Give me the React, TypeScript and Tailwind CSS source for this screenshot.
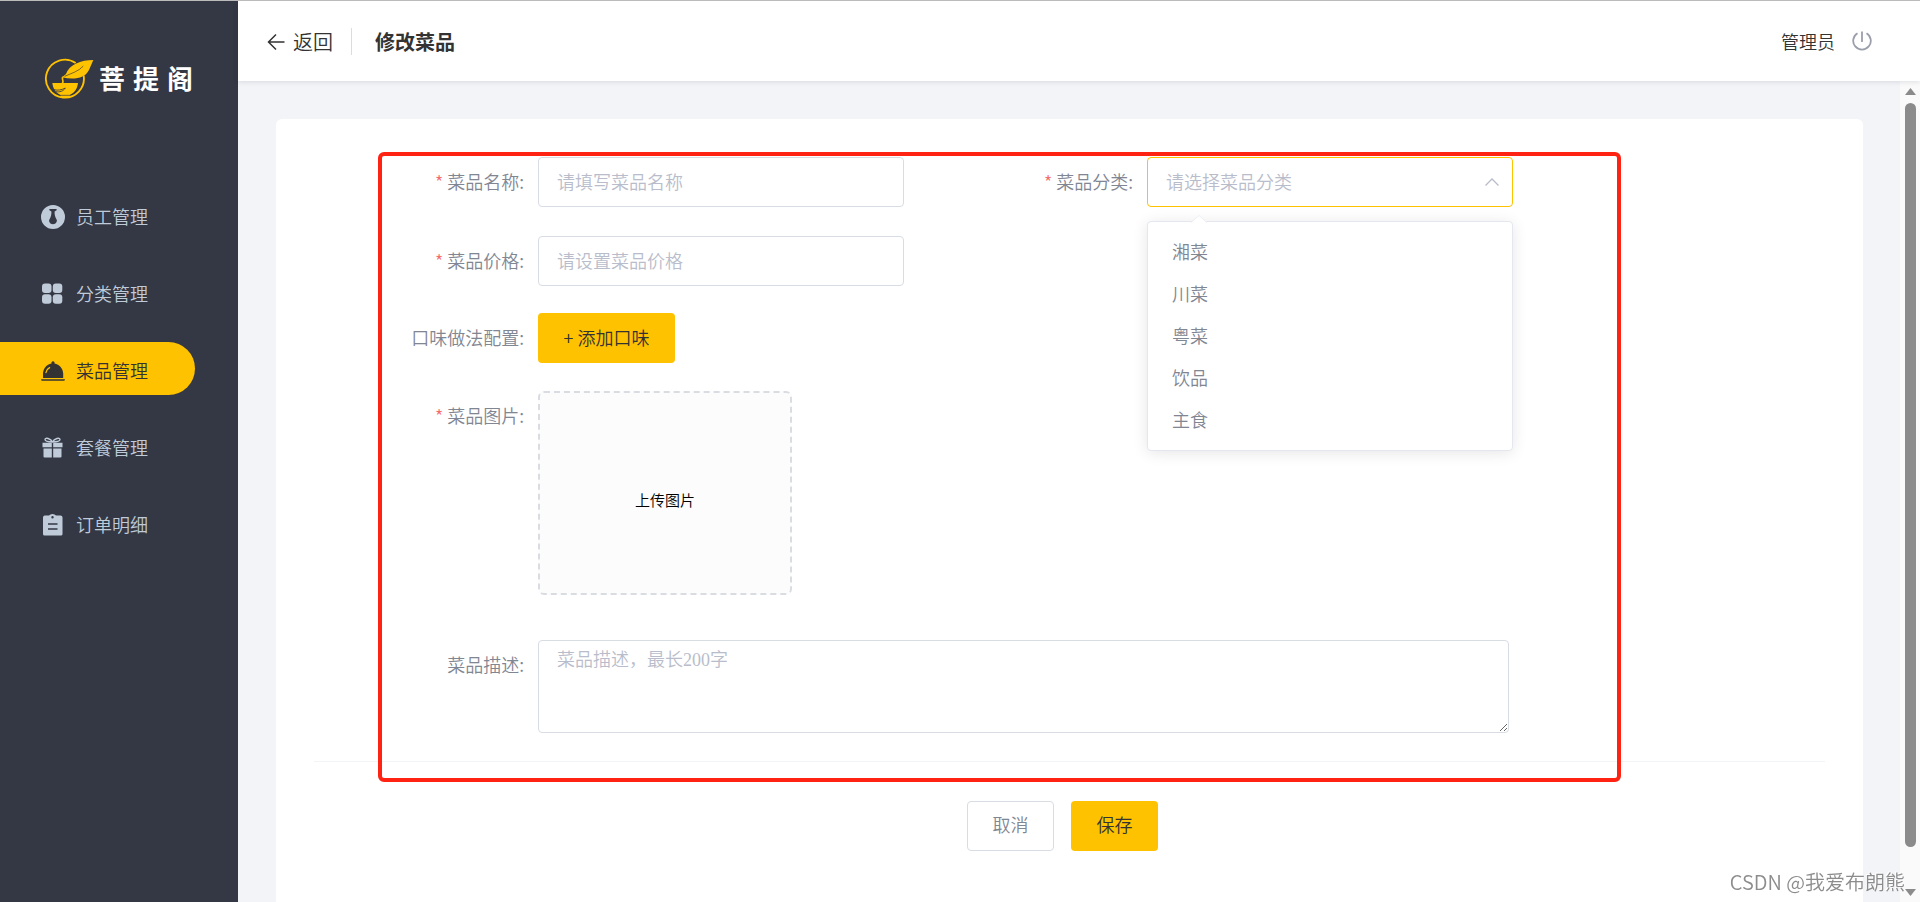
import React, { useState } from 'react';

interface MenuItem {
  name: string;
  icon: React.ReactNode;
}

const iconClass = 'w-6 h-6 shrink-0';

const menu: MenuItem[] = [
  {
    name: '员工管理',
    icon: (
      <svg viewBox="0 0 24 24" className={iconClass} fill="currentColor">
        <path
          fillRule="evenodd"
          d="M12 0a12 12 0 1 1 0 24a12 12 0 0 1 0-24zM8.4 4v1.200L10.400 6.600C10.600 9.600 9.900 12.200 8.300 14.800C7.600 16.200 8.900 19.200 12 19.200s4.400-3 3.700-4.400C14.100 12.200 13.400 9.600 13.600 6.600L15.600 5.200V4z"
        />
      </svg>
    ),
  },
  {
    name: '分类管理',
    icon: (
      <svg viewBox="0 0 24 24" className={iconClass} fill="currentColor">
        <rect x="1" y="1.500" width="9.500" height="9.500" rx="3" />
        <rect x="11.800" y="1.500" width="9.500" height="9.500" rx="3" />
        <rect x="1" y="12.300" width="9.500" height="9.500" rx="3" />
        <rect x="11.800" y="12.300" width="9.500" height="9.500" rx="3" />
      </svg>
    ),
  },
  {
    name: '菜品管理',
    icon: (
      <svg viewBox="0 0 24 24" className={iconClass} fill="currentColor">
        <path d="M10.500 4.500a1.600 1.600 0 1 1 3 0C18.500 5.400 22 9.600 22.200 14.500v4.500H2v-4.500C2.200 9.600 5.500 5.400 10.500 4.500z" />
        <path d="M5 13.500c.4-2.200 1.600-3.800 3.600-4.800" stroke="#ffc200" strokeWidth="1.300" fill="none" strokeLinecap="round" />
        <path d="M0 20.200h24l-.6 1.600H.6z" />
      </svg>
    ),
  },
  {
    name: '套餐管理',
    icon: (
      <svg viewBox="0 0 24 24" className={iconClass} fill="currentColor">
        <path
          d="M11.500 6C9.800 2.400 4 1 4 3.600 4 5.600 7.500 6 11.500 6zm0 0c1.700-3.600 7.500-5 7.500-2.400C19 5.600 15.500 6 11.500 6z"
          fill="none"
          stroke="currentColor"
          strokeWidth="1.400"
        />
        <path d="M1.500 6.800h9.300v4.400H1.500zM12.200 6.800h9.300v4.400h-9.300zM2.500 12.500h8.300V21.500H3.500a1 1 0 0 1-1-1zM12.200 12.500h8.300V20.500a1 1 0 0 1-1 1h-7.300z" />
      </svg>
    ),
  },
  {
    name: '订单明细',
    icon: (
      <svg viewBox="0 0 24 24" className={iconClass} fill="currentColor">
        <path
          fillRule="evenodd"
          d="M3.500 2.500h4.500a4 3 0 0 1 7 0h4.500a2 2 0 0 1 2 2v16.500a1.500 1.500 0 0 1-1.500 1.500H3.500A1.500 1.500 0 0 1 2 21V4.500a2 2 0 0 1 1.500-2zM7 10.300v1.500h9.500v-1.500zM7 15.300v1.500h9.500v-1.500zM11.500 3a1.200 1.200 0 1 0 0 2.400a1.200 1.200 0 0 0 0-2.400z"
        />
      </svg>
    ),
  },
];

const categories = ['湘菜', '川菜', '粤菜', '饮品', '主食'];

const Logo: React.FC = () => (
  <div className="flex items-center gap-1 pt-[56px] pl-[44px] h-[100px]">
    <svg viewBox="42 38 153 126" className="w-[51px] h-[42px]" fill="none">
      <path d="M137 53A57 57 0 1 0 161 91" stroke="#ffc200" strokeWidth="5.500" />
      <path d="M190 44C152 44 118 58 108 86L96 96C132 104 164 100 177 74C182 64 185 54 190 44Z" fill="#ffc200" />
      <path d="M104 93C124 84 146 78 160 62" stroke="#343744" strokeWidth="2" />
      <path d="M99 95C92 100 104 106 97 114" stroke="#ffc200" strokeWidth="5" />
      <path d="M67 113H144C142 130 134 142 119 149V156H92V149C77 142 69 130 67 113Z" fill="#ffc200" />
      <path d="M72 133C82 136 96 134 106 128C100 138 88 141 78 139" stroke="#343744" strokeWidth="2.500" />
      <path d="M92 150H119" stroke="#343744" strokeWidth="2" />
    </svg>
    <div className="flex gap-2 pb-0.5 text-[26px] leading-8 font-bold text-white">
      <span>菩</span>
      <span>提</span>
      <span>阁</span>
    </div>
  </div>
);

const Sidebar: React.FC = () => (
  <aside className="w-[238px] shrink-0 bg-[#343744]">
    <Logo />
    <nav className="flex flex-col gap-6 mt-[87px]">
      {menu.map((item) => {
        const active = item.name === '菜品管理';
        return (
          <a
            key={item.name}
            href="#"
            className={
              active
                ? 'flex items-center gap-[11px] h-[53px] w-[195px] pl-[41px] pt-1 rounded-r-full bg-[#ffc200] text-[#333333]'
                : 'flex items-center gap-[11px] h-[53px] w-[195px] pl-[41px] pt-1 text-[#bfcbd9]'
            }
          >
            {item.icon}
            <span className="pb-0.5">{item.name}</span>
          </a>
        );
      })}
    </nav>
  </aside>
);

const Header: React.FC = () => (
  <header className="relative z-10 flex items-center h-20 pl-[29px] pr-12 bg-white shadow-[0_1px_5px_rgba(0,21,41,0.12)]">
    <button type="button" className="flex items-center gap-2 pt-0.5 text-xl text-[#333333]">
      <svg viewBox="0 0 18 18" className="w-[18px] h-[18px]" fill="none" stroke="currentColor" strokeWidth="1.500">
        <path d="M17.500 9H2M9 1.500L1.500 9L9 16.500" />
      </svg>
      返回
    </button>
    <div className="w-px h-[27px] ml-[18px] mr-[23px] bg-[#d8dde3]" />
    <h1 className="pt-0.5 text-xl font-bold text-[#333333]">修改菜品</h1>
    <div className="flex items-center gap-[17px] ml-auto text-[#333333]">
      <span>管理员</span>
      <button type="button" aria-label="退出">
        <svg viewBox="0 0 20 20" className="w-5 h-5" fill="none" stroke="#9b9fab" strokeWidth="1.800">
          <path d="M5.500 2.200A8.800 8.800 0 1 0 14.500 2.200M10 .5V11" />
        </svg>
      </button>
    </div>
  </header>
);

interface FieldProps {
  id: string;
  label: string;
  required?: boolean;
  children: React.ReactNode;
}

const Field: React.FC<FieldProps> = ({ id, label, required, children }) => (
  <div className="flex items-start">
    <label htmlFor={id} className="w-[150px] shrink-0 pr-[14px] text-right leading-[48px] text-[#818693]">
      {required && <span className="mr-1 text-[#f56c6c]">*</span>}
      {label}:
    </label>
    {children}
  </div>
);

const inputClass =
  'w-[366px] h-[50px] px-[18px] pb-0.5 rounded border border-[#d8dde3] bg-white text-[#333333] placeholder:text-[#b9bdcb] focus:outline-none';

const CategorySelect: React.FC = () => {
  const [open, setOpen] = useState(true);
  const [value, setValue] = useState('');

  return (
    <div className="relative">
      <select
        id="category"
        value={value}
        onChange={(e) => setValue(e.target.value)}
        onMouseDown={(e) => {
          e.preventDefault();
          setOpen(!open);
        }}
        className={`w-[366px] h-[50px] px-[18px] pb-0.5 rounded border border-[#ffc200] bg-white appearance-none focus:outline-none ${
          value ? 'text-[#333333]' : 'text-[#b9bdcb]'
        }`}
      >
        <option value="">请选择菜品分类</option>
        {categories.map((c) => (
          <option key={c}>{c}</option>
        ))}
      </select>
      <svg
        viewBox="0 0 14 8"
        className="absolute right-[14px] top-[21px] w-[14px] h-2 pointer-events-none"
        fill="none"
        stroke="#b9bdcb"
        strokeWidth="1.300"
      >
        <path d="M.5 7.500L7 1L13.500 7.500" />
      </svg>

      {open && (
        <div className="absolute left-0 top-16 w-full pt-2 pb-[10px] rounded border border-[#e4e7ed] bg-white shadow-[0_2px_15px_rgba(0,0,0,0.1)]">
          <svg viewBox="0 0 16 8" className="absolute left-[43px] -top-[7px] w-4 h-2">
            <path d="M0 7.500L8 0L16 7.500V8H0z" fill="#ffffff" />
            <path d="M0 7.500L8 .5L16 7.500" fill="none" stroke="#ebeef5" />
          </svg>
          <ul>
            {categories.map((c) => (
              <li key={c}>
                <button
                  type="button"
                  className="block w-full h-[42px] px-6 text-left text-[#818693] hover:bg-[#f5f7fa]"
                  onClick={() => {
                    setValue(c);
                    setOpen(false);
                  }}
                >
                  {c}
                </button>
              </li>
            ))}
          </ul>
        </div>
      )}
    </div>
  );
};

const DishForm: React.FC = () => (
  <form className="relative flex-1 px-[38px] pt-[38px] rounded-t-md bg-white" onSubmit={(e) => e.preventDefault()}>
    <div className="flex flex-col pl-[74px]">
      <div className="flex gap-[93px]">
        <Field id="name" label="菜品名称" required>
          <input id="name" type="text" placeholder="请填写菜品名称" className={inputClass} />
        </Field>
        <Field id="category" label="菜品分类" required>
          <CategorySelect />
        </Field>
      </div>
      <div className="mt-[29px]">
        <Field id="price" label="菜品价格" required>
          <input id="price" type="text" placeholder="请设置菜品价格" className={inputClass} />
        </Field>
      </div>
      <div className="mt-[27px]">
        <Field id="flavor" label="口味做法配置">
          <button id="flavor" type="button" className="h-[50px] w-[137px] pb-0.5 rounded bg-[#ffc200] text-[#333333]">
            + 添加口味
          </button>
        </Field>
      </div>
      <div className="mt-[28px]">
        <Field id="image" label="菜品图片" required>
          <button
            id="image"
            type="button"
            className="w-[254px] h-[204px] pt-[14px] rounded-md border-2 border-dashed border-[#d9dde2] bg-[#fcfcfc] text-[15px] text-black"
          >
            上传图片
          </button>
        </Field>
      </div>
      <div className="mt-[45px] pr-[316px]">
        <Field id="description" label="菜品描述">
          <textarea
            id="description"
            placeholder="菜品描述，最长200字"
            className="flex-1 h-[93px] px-[18px] py-[5px] rounded border border-[#d8dde3] bg-white font-['Liberation_Serif','Noto_Sans_CJK_SC',serif] placeholder:text-[#b9bdcb] focus:outline-none"
          />
        </Field>
      </div>
    </div>

    <div className="mt-7 pt-[39px] pr-[14px] flex justify-center gap-[17px] border-t border-[#f3f4f5]">
      <button type="button" className="w-[87px] h-[50px] pb-1 rounded border border-[#d8dde3] bg-white text-[#818693]">
        取消
      </button>
      <button type="submit" className="w-[87px] h-[50px] pb-1 rounded bg-[#ffc200] text-[#333333]">
        保存
      </button>
    </div>

    {/* highlight frame over the fields */}
    <div className="absolute left-[102px] right-[242px] top-[33px] h-[630px] rounded-md border-4 border-[#ff2314] pointer-events-none" />
  </form>
);

const ScrollBar: React.FC = () => (
  <div className="flex flex-col items-center w-5 shrink-0 gap-2 pt-[7px] pb-[6px] pl-px bg-[#fafafa]">
    <svg viewBox="0 0 11 7" className="w-[11px] h-[7px]" fill="#8b8b8b">
      <path d="M5.500 0L11 7H0z" />
    </svg>
    <div className="flex-1 w-[11px] mb-[34px] rounded-full bg-[#8b8b8b]" />
    <svg viewBox="0 0 11 7" className="w-[11px] h-[7px]" fill="#8b8b8b">
      <path d="M5.500 7L0 0h11z" />
    </svg>
  </div>
);

const App: React.FC = () => (
  <div className="flex h-screen overflow-hidden border-t border-[#bbbbbb] bg-[#f3f4f8] font-['Noto_Sans_CJK_SC',sans-serif] text-[18px] leading-7 font-[350]">
    <Sidebar />
    <div className="flex flex-col flex-1 min-w-0">
      <Header />
      <div className="flex flex-1 min-h-0">
        <main className="flex flex-1 min-w-0 pt-[38px] pl-[38px] pr-[37px]">
          <DishForm />
        </main>
        <ScrollBar />
      </div>
    </div>
    <div className="fixed right-[15px] bottom-[6px] z-20 text-xl leading-7 text-[#8c8c8c] [text-shadow:-1px_-1px_0_#ffffff] pointer-events-none">
      CSDN @我爱布朗熊
    </div>
  </div>
);

export default App;
